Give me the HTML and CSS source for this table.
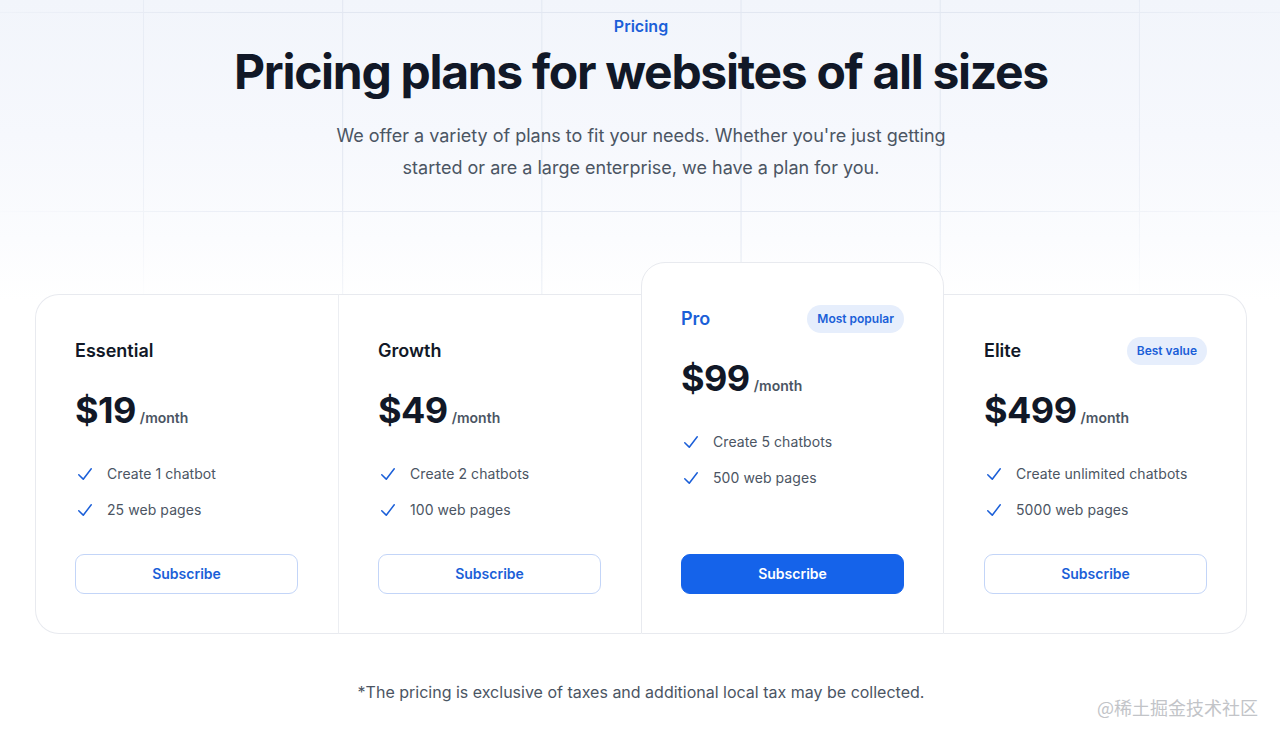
FILE: index.html
```html
<!DOCTYPE html>
<html lang="en">
<head>
<meta charset="utf-8">
<title>Pricing</title>
<link rel="stylesheet" href="styles.css">
</head>
<body>
<main class="page">
  <section class="hero">
    <p class="eyebrow">Pricing</p>
    <h1 class="title">Pricing plans for websites of all sizes</h1>
    <p class="lead">We offer a variety of plans to fit your needs. Whether you're just getting started or are a large enterprise, we have a plan for you.</p>
  </section>

  <section class="plans">
    <div class="plan plan-first">
      <div class="plan-head"><h3 class="plan-name">Essential</h3></div>
      <p class="price"><span class="amount">$19</span><span class="per">/month</span></p>
      <ul class="features">
        <li><svg class="check" viewBox="0 0 20 20" fill="currentColor"><path fill-rule="evenodd" d="M16.704 4.153a.75.75 0 01.143 1.052l-8 10.5a.75.75 0 01-1.127.075l-4.5-4.5a.75.75 0 011.06-1.06l3.894 3.893 7.48-9.817a.75.75 0 011.05-.143z" clip-rule="evenodd"/></svg>Create 1 chatbot</li>
        <li><svg class="check" viewBox="0 0 20 20" fill="currentColor"><path fill-rule="evenodd" d="M16.704 4.153a.75.75 0 01.143 1.052l-8 10.5a.75.75 0 01-1.127.075l-4.5-4.5a.75.75 0 011.06-1.06l3.894 3.893 7.48-9.817a.75.75 0 011.05-.143z" clip-rule="evenodd"/></svg>25 web pages</li>
      </ul>
      <a class="btn btn-outline" href="#">Subscribe</a>
    </div>

    <div class="plan plan-divided">
      <div class="plan-head"><h3 class="plan-name">Growth</h3></div>
      <p class="price"><span class="amount">$49</span><span class="per">/month</span></p>
      <ul class="features">
        <li><svg class="check" viewBox="0 0 20 20" fill="currentColor"><path fill-rule="evenodd" d="M16.704 4.153a.75.75 0 01.143 1.052l-8 10.5a.75.75 0 01-1.127.075l-4.5-4.5a.75.75 0 011.06-1.06l3.894 3.893 7.48-9.817a.75.75 0 011.05-.143z" clip-rule="evenodd"/></svg>Create 2 chatbots</li>
        <li><svg class="check" viewBox="0 0 20 20" fill="currentColor"><path fill-rule="evenodd" d="M16.704 4.153a.75.75 0 01.143 1.052l-8 10.5a.75.75 0 01-1.127.075l-4.5-4.5a.75.75 0 011.06-1.06l3.894 3.893 7.48-9.817a.75.75 0 011.05-.143z" clip-rule="evenodd"/></svg>100 web pages</li>
      </ul>
      <a class="btn btn-outline" href="#">Subscribe</a>
    </div>

    <div class="plan plan-featured">
      <div class="plan-head"><h3 class="plan-name plan-name-blue">Pro</h3><span class="badge">Most popular</span></div>
      <p class="price"><span class="amount">$99</span><span class="per">/month</span></p>
      <ul class="features">
        <li><svg class="check" viewBox="0 0 20 20" fill="currentColor"><path fill-rule="evenodd" d="M16.704 4.153a.75.75 0 01.143 1.052l-8 10.5a.75.75 0 01-1.127.075l-4.5-4.5a.75.75 0 011.06-1.06l3.894 3.893 7.48-9.817a.75.75 0 011.05-.143z" clip-rule="evenodd"/></svg>Create 5 chatbots</li>
        <li><svg class="check" viewBox="0 0 20 20" fill="currentColor"><path fill-rule="evenodd" d="M16.704 4.153a.75.75 0 01.143 1.052l-8 10.5a.75.75 0 01-1.127.075l-4.5-4.5a.75.75 0 011.06-1.06l3.894 3.893 7.48-9.817a.75.75 0 011.05-.143z" clip-rule="evenodd"/></svg>500 web pages</li>
      </ul>
      <a class="btn btn-solid" href="#">Subscribe</a>
    </div>

    <div class="plan plan-last">
      <div class="plan-head"><h3 class="plan-name">Elite</h3><span class="badge">Best value</span></div>
      <p class="price"><span class="amount">$499</span><span class="per">/month</span></p>
      <ul class="features">
        <li><svg class="check" viewBox="0 0 20 20" fill="currentColor"><path fill-rule="evenodd" d="M16.704 4.153a.75.75 0 01.143 1.052l-8 10.5a.75.75 0 01-1.127.075l-4.5-4.5a.75.75 0 011.06-1.06l3.894 3.893 7.48-9.817a.75.75 0 011.05-.143z" clip-rule="evenodd"/></svg>Create unlimited chatbots</li>
        <li><svg class="check" viewBox="0 0 20 20" fill="currentColor"><path fill-rule="evenodd" d="M16.704 4.153a.75.75 0 01.143 1.052l-8 10.5a.75.75 0 01-1.127.075l-4.5-4.5a.75.75 0 011.06-1.06l3.894 3.893 7.48-9.817a.75.75 0 011.05-.143z" clip-rule="evenodd"/></svg>5000 web pages</li>
      </ul>
      <a class="btn btn-outline" href="#">Subscribe</a>
    </div>
  </section>

  <p class="note">*The pricing is exclusive of taxes and additional local tax may be collected.</p>
</main>
<div class="watermark">@稀土掘金技术社区</div>
</body>
</html>
```

FILE: styles.css
```css
* { box-sizing: border-box; }

html, body {
  margin: 0;
  padding: 0;
}

body {
  background: #ffffff;
  font-family: Inter, "Noto Sans", "Noto Sans CJK SC", sans-serif;
  color: #111827;
  position: relative;
  min-height: 739px;
  overflow: hidden;
}

.page {
  position: relative;
  isolation: isolate;
  padding: 12px 33px 0 35px;
}

.page::before {
  content: "";
  position: absolute;
  z-index: -2;
  top: 0;
  left: 0;
  right: 0;
  height: 300px;
  background: linear-gradient(to bottom, #f2f5fb 0%, #f6f8fd 45%, #fbfcfe 80%, #ffffff 100%);
}

.page::after {
  content: "";
  position: absolute;
  z-index: -1;
  top: 0;
  left: 0;
  right: 0;
  height: 300px;
  background-image:
    linear-gradient(to right, #e2e7f1 1px, transparent 1px),
    linear-gradient(to bottom, #e2e7f1 1px, transparent 1px);
  background-size: 199.2px 199px;
  background-position: 143px 12px;
  -webkit-mask-image: radial-gradient(ellipse 58% 110% at 50% 20%, #000 55%, transparent 100%);
  mask-image: radial-gradient(ellipse 58% 110% at 50% 20%, #000 55%, transparent 100%);
}

.hero {
  display: flex;
  flex-direction: column;
  align-items: center;
  text-align: center;
}

.eyebrow {
  margin: 0;
  font-size: 16px;
  line-height: 28px;
  font-weight: 600;
  color: #1b5fd8;
}

.title {
  margin: 8px 0 0;
  font-size: 48px;
  line-height: 48px;
  font-weight: 700;
  letter-spacing: -0.027em;
  color: #111827;
}

.lead {
  margin: 24px 0 0;
  max-width: 640px;
  font-size: 18px;
  line-height: 32px;
  color: #4b5563;
}

.plans {
  margin-top: 110px;
  display: grid;
  grid-template-columns: repeat(4, 1fr);
  align-items: stretch;
}

.plan {
  display: flex;
  flex-direction: column;
  background: #ffffff;
  padding: 40px 40px 39px;
  border-top: 1px solid #e8eaef;
  border-bottom: 1px solid #e8eaef;
}

.plan-first {
  border-left: 1px solid #e8eaef;
  border-radius: 24px 0 0 24px;
  padding-left: 39px;
}

.plan-divided {
  border-left: 1px solid #eceef2;
  padding-left: 39px;
}

.plan-featured {
  margin-top: -32px;
  border: 1px solid #e8eaef;
  border-radius: 24px 24px 0 0;
  padding-left: 39px;
  padding-right: 39px;
}

.plan-last {
  border-right: 1px solid #e8eaef;
  border-radius: 0 24px 24px 0;
  padding-right: 39px;
}

.plan-head {
  display: flex;
  align-items: center;
  justify-content: space-between;
  gap: 16px;
  height: 32px;
}

.plan-name {
  margin: 0;
  font-size: 18px;
  line-height: 32px;
  font-weight: 600;
  color: #111827;
}

.plan-name-blue {
  color: #1b5fd8;
}

.badge {
  display: inline-block;
  padding: 4px 10px;
  border-radius: 999px;
  background: #e6eefc;
  color: #1b5fd8;
  font-size: 12px;
  line-height: 20px;
  font-weight: 600;
}

.price {
  margin: 23px 0 0;
  display: flex;
  align-items: baseline;
  gap: 4px;
}

.amount {
  font-size: 36px;
  line-height: 40px;
  font-weight: 700;
  letter-spacing: -0.015em;
  color: #111827;
}

.per {
  font-size: 14px;
  line-height: 24px;
  font-weight: 600;
  color: #4b5563;
}

.features {
  list-style: none;
  margin: 32px 0 0;
  padding: 0;
  display: flex;
  flex-direction: column;
  gap: 12px;
  font-size: 14px;
  line-height: 24px;
  color: #4b5563;
  letter-spacing: 0.005em;
}

.features li {
  display: flex;
  gap: 12px;
}

.check {
  flex: none;
  width: 20px;
  height: 24px;
  color: #1b5fd8;
}

.btn {
  display: block;
  margin-top: 32px;
  height: 40px;
  padding: 7px 12px;
  border-radius: 9px;
  text-align: center;
  text-decoration: none;
  font-size: 14px;
  line-height: 24px;
  font-weight: 600;
}

.btn-outline {
  border: 1px solid #c3d5f8;
  color: #1b5fd8;
  background: #ffffff;
}

.btn-solid {
  margin-top: auto;
  border: 1px solid #1563ea;
  background: #1563ea;
  color: #ffffff;
}

.note {
  margin: 46px 0 0;
  text-align: center;
  font-size: 16px;
  line-height: 24px;
  color: #4b5563;
}

.watermark {
  position: absolute;
  top: 694px;
  right: 22px;
  font-family: "Noto Sans CJK SC", sans-serif;
  font-size: 18px;
  line-height: 26px;
  color: #c2c4c8;
}
```
